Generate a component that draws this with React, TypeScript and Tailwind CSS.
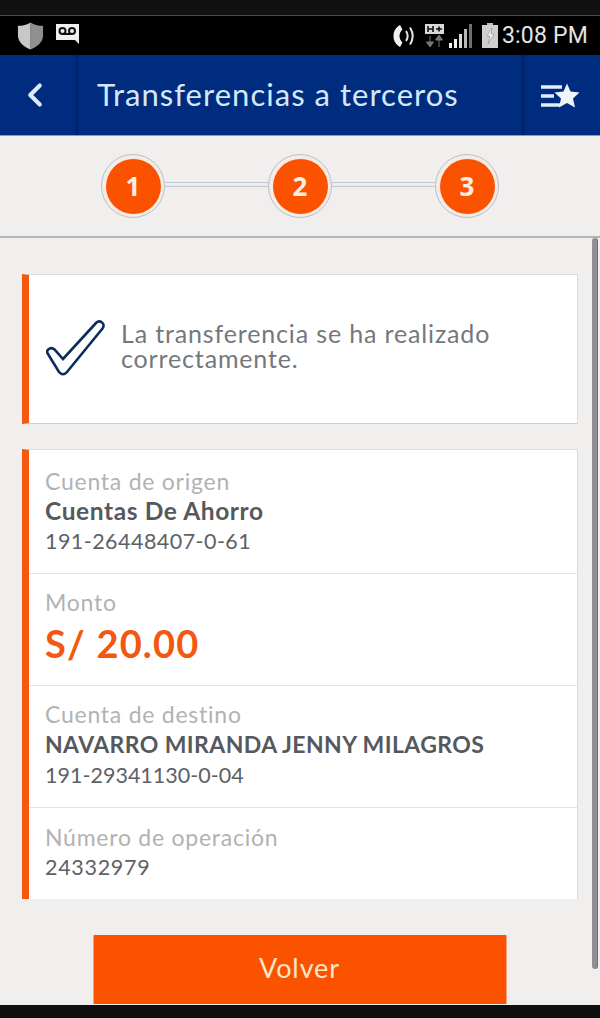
import React from 'react';
import { ChevronLeft } from 'lucide-react';

const sans = "font-['Lato','Noto_Sans',sans-serif]";

function StatusBar() {
  return (
    <div className="h-[39px] bg-black flex items-center pl-[17px] pr-[12px] shrink-0">
      <svg width="27" height="28" viewBox="0 0 27 29" className="mt-[1px]">
        <path d="M13.5 0.5 C17 3 21.5 4 26.5 4 L26.5 14 C26.5 21 20 26 13.5 28.5 Z" fill="#8f8f8f" />
        <path d="M13.5 0.5 C10 3 5.500 4 0.500 4 L0.500 14 C0.500 21 7 26 13.5 28.5 Z" fill="#c8c8c8" />
      </svg>
      <svg width="25" height="24" viewBox="0 0 25 24" className="ml-[11px] -mt-[3px]">
        <path d="M1 2 H24 V22 L20 18 H1 Z" fill="#efefef" />
        <circle cx="7.500" cy="9" r="3" fill="none" stroke="#111" strokeWidth="2" />
        <circle cx="17" cy="9" r="3" fill="none" stroke="#111" strokeWidth="2" />
        <path d="M7.500 12 H17" stroke="#111" strokeWidth="2" />
      </svg>
      <div className="ml-auto flex items-center">
        <svg width="22" height="24" viewBox="0 0 22 24">
          <path d="M7 1 C2.500 3.500 0.500 7.500 0.500 12 C0.500 16.500 2.500 20.500 7 23 L9.500 18.500 C7.500 16.500 6.500 14.500 6.500 12 C6.500 9.500 7.500 7.500 9.500 5.500 Z" fill="#f2f2f2" />
          <path d="M13 7 C15 10 15 14 13 17" fill="none" stroke="#e6e6e6" strokeWidth="2" />
          <path d="M17 3.500 C20.500 9 20.500 15 17 20.500" fill="none" stroke="#e6e6e6" strokeWidth="2" />
        </svg>
        <div className="ml-[10px] mr-[1px] w-[19px] h-[24px]">
          <svg width="19" height="24" viewBox="0 0 19 24">
            <rect x="0" y="0" width="19" height="10" fill="#d9d9d9" />
            <path d="M3 2 V8 M8 2 V8 M3 5 H8 M11 5 H17 M14 2.500 V7.500" stroke="#111" strokeWidth="1.600" />
            <path d="M5 12 V19 M1.500 18 L5 23 L8.500 18 Z" fill="#777" stroke="#777" />
            <path d="M14 23 V15 M10.500 16 L14 11 L17.500 16 Z" fill="#777" stroke="#777" />
          </svg>
        </div>
        <svg width="24" height="24" viewBox="0 0 24 24" className="ml-[3px]">
          <rect x="1" y="19" width="3" height="5" fill="#f0f0f0" />
          <rect x="6" y="15" width="3" height="9" fill="#f0f0f0" />
          <rect x="11" y="10" width="3" height="14" fill="#d8d8d8" />
          <rect x="16" y="5" width="3" height="19" fill="#b8b8b8" />
          <rect x="21" y="0" width="3" height="24" fill="#6f6f6f" />
        </svg>
        <svg width="16" height="25" viewBox="0 0 16 25" className="ml-[10px]">
          <rect x="5" y="0" width="6" height="3" fill="#bdbdbd" />
          <rect x="0" y="2" width="16" height="23" fill="#cfcfcf" />
          <path d="M10 5 L5 13 H8 L6 21 L12 11 H9 Z" fill="#f5f5f5" stroke="#8a8a8a" strokeWidth="0.600" />
        </svg>
        <span className="ml-[4px] font-['Roboto',sans-serif] text-[23px] leading-none text-[#e4e4e4] tracking-[0.2px]">3:08 PM</span>
      </div>
    </div>
  );
}

function Header() {
  return (
    <div className="h-[81px] bg-[#002c7f] flex items-stretch border-b border-[#7f9bd0] shrink-0">
      <div className="w-[78px] flex items-center justify-center border-r-[3px] border-[#00246b] pr-[6px]">
        <ChevronLeft size={38} strokeWidth={2.6} className="text-[#dcebfa]" />
      </div>
      <h1 className={`${sans} flex-1 flex items-center pl-[19px] pb-[2px] text-[31px] font-normal tracking-[1.03px] text-[#d5e8f8]`}>
        Transferencias a terceros
      </h1>
      <div className="w-[78px] flex items-center justify-center border-l-[3px] border-[#00246b] pr-[5px]">
        <svg width="40" height="26" viewBox="0 0 40 26" className="mt-[1px]">
          <path d="M1 4 H22 M1 13 H14 M1 22 H20" stroke="#e2eef9" strokeWidth="3.500" />
          <path d="M27 0.500 L30.500 8.500 L39.500 9.500 L33 15.500 L35 24.500 L27 20 L19 24.500 L21 15.500 L14.500 9.500 L23.500 8.500 Z" fill="#eef4fa" />
        </svg>
      </div>
    </div>
  );
}

function Step({ n }: { n: number }) {
  return (
    <div className="w-[64px] h-[64px] rounded-full border border-[#b9bfc9] bg-[#f6ece5] flex items-center justify-center shrink-0">
      <div className="w-[55px] h-[55px] rounded-full bg-[#fb5200] flex items-center justify-center font-['Open_Sans',sans-serif] font-bold text-[26px] text-[#fdeee0]">
        {n}
      </div>
    </div>
  );
}

function Stepper() {
  return (
    <div className="h-[102px] bg-[#f0efee] border-b-2 border-[#b5b5b5] flex items-center justify-center shrink-0">
      <Step n={1} />
      <div className="w-[103px] h-[5px] -mt-[4px] border-y border-[#c2c8d2] bg-[#eceded]" />
      <Step n={2} />
      <div className="w-[103px] h-[5px] -mt-[4px] border-y border-[#c2c8d2] bg-[#eceded]" />
      <Step n={3} />
    </div>
  );
}

function Row({ className, children }: { className: string; children: React.ReactNode }) {
  return <div className={`pl-[16px] border-b border-[#e3e3e3] last:border-b-0 ${className}`}>{children}</div>;
}

const labelCls = 'text-[23px] leading-[30px] text-[#b2b2b2] tracking-[0.75px]';
const boldCls = 'leading-[30px] font-bold text-[#55595e]';
const plainCls = 'text-[21.500px] leading-[30px] text-[#5d6166]';

export default function App() {
  return (
    <div className={`${sans} w-[600px] h-[1018px] bg-[#f0efee] flex flex-col overflow-hidden relative`}>
      <div className="h-[16px] bg-[#111111] border-b border-[#4a4a4a] shrink-0" />
      <StatusBar />
      <Header />
      <Stepper />

      <div className="flex-1 min-h-0 flex flex-col pt-[36px] pl-[22px] pr-[22px]">
        <div className="h-[150px] bg-white border-l-[7px] border-l-[#f4570f] border-y border-r border-[#dcdcdc] border-b-[#cfcfcf] flex items-center pl-[17px] pb-[2px] shrink-0">
          <svg width="60" height="56" viewBox="0 0 60 56" className="shrink-0">
            <path d="M2 34 C0.500 32 1 30 3 29 C5 27.500 7 28 8.500 29.500 L17 39 L50 3 C52 1 54 1 56 2.500 C58 4 58 6.500 56.500 8.500 L21 52 C18.500 55 15.500 55 13 52 Z" fill="none" stroke="#0d2c5e" strokeWidth="2.600" />
          </svg>
          <p className="ml-[15px] mb-[5px] text-[25px] leading-[25px] text-[#73787d] tracking-[0.85px]">
            La transferencia se ha realizado<br />correctamente.
          </p>
        </div>

        <div className="mt-[25px] h-[450px] bg-white border-l-[7px] border-l-[#f4570f] border-t border-r border-[#dcdcdc] shrink-0">
          <Row className="h-[124px] pt-[16px]">
            <div className={labelCls}>Cuenta de origen</div>
            <div className={`${boldCls} text-[24.500px] tracking-[0.6px]`}>Cuentas De Ahorro</div>
            <div className={`${plainCls} tracking-[0.45px]`}>191-26448407-0-61</div>
          </Row>
          <Row className="h-[112px] pt-[13px]">
            <div className={labelCls}>Monto</div>
            <div className="text-[38px] leading-[46px] font-bold text-[#f4570f] tracking-[1.200px] mt-[3px]">S/ 20.00</div>
          </Row>
          <Row className="h-[122px] pt-[13px]">
            <div className={labelCls}>Cuenta de destino</div>
            <div className={`${boldCls} text-[23px] tracking-[0.4px]`}>NAVARRO MIRANDA JENNY MILAGROS</div>
            <div className={`${plainCls} tracking-[0.01px] mt-[1px]`}>191-29341130-0-04</div>
          </Row>
          <Row className="h-[91px] pt-[14px]">
            <div className={labelCls}>Número de operación</div>
            <div className={`${plainCls} tracking-[0.7px]`}>24332979</div>
          </Row>
        </div>

        <button className="mt-[36px] mx-auto w-[413px] h-[69px] bg-[#fb5200] text-[27px] text-[#fde6c8] tracking-[0.9px] pb-[3px] shrink-0 rounded-[1px] -translate-x-[0.500px]">
          Volver
        </button>
      </div>

      <div className="h-[13px] bg-[#0f0f0f] shrink-0" />
      <div className="absolute left-[592px] top-[238px] w-[6px] h-[731px] rounded-full bg-[#8f8f95] border-r border-[#6f6f75]" />
    </div>
  );
}
